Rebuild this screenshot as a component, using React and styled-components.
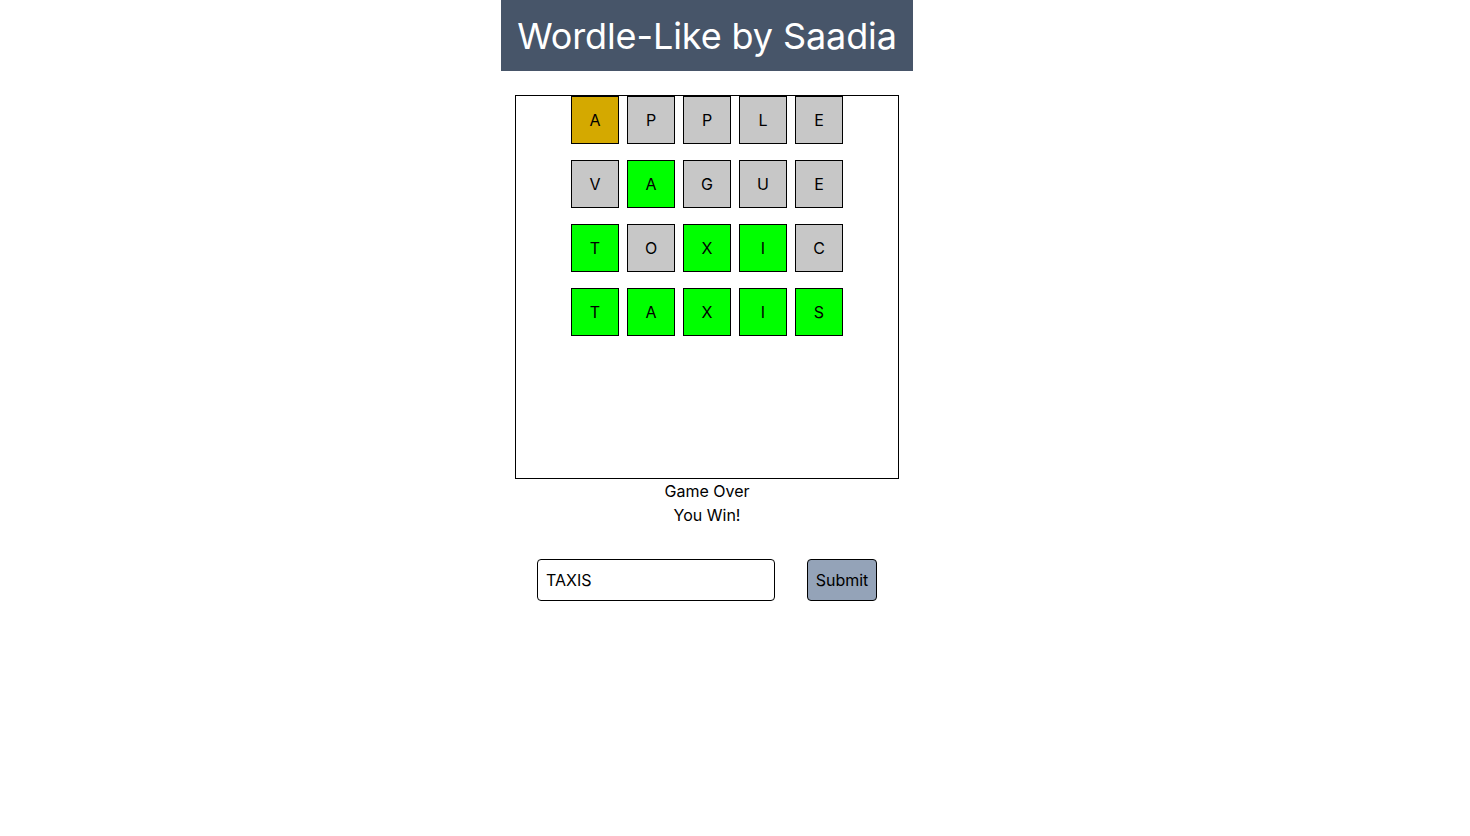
import React, { useState } from 'react';
import styled, { createGlobalStyle } from 'styled-components';

const GlobalStyle = createGlobalStyle`
  body {
    margin: 0;
    background: #fff;
    font-family: Inter, 'Noto Sans', sans-serif;
    color: #000;
  }
`;

const guesses = [
  { word: 'APPLE', marks: 'yxxxx' },
  { word: 'VAGUE', marks: 'xgxxx' },
  { word: 'TOXIC', marks: 'gxggx' },
  { word: 'TAXIS', marks: 'ggggg' },
];

const tileColors = {
  g: '#00ff00',
  y: '#d4a900',
  x: '#c7c7c7',
};

export default function App() {
  const [value, setValue] = useState('TAXIS');

  return (
    <>
      <GlobalStyle />
      <Page>
        <Title>Wordle-Like by Saadia</Title>
        <Board>
          {guesses.map((g) => (
            <Row key={g.word}>
              {g.word.split('').map((ch, i) => (
                <Tile key={i} $mark={g.marks[i]}>
                  {ch}
                </Tile>
              ))}
            </Row>
          ))}
        </Board>
        <Status>
          <p>Game Over</p>
          <p>You Win!</p>
        </Status>
        <Form onSubmit={(e) => e.preventDefault()}>
          <GuessInput value={value} onChange={(e) => setValue(e.target.value)} />
          <SubmitButton type='submit'>Submit</SubmitButton>
        </Form>
      </Page>
    </>
  );
}

const Page = styled.div`
  display: flex;
  flex-direction: column;
  align-items: center;
  padding-right: 56px;
`;

const Title = styled.h1`
  margin: 0;
  padding: 16px 16px 15px;
  background-color: #475569;
  color: #fff;
  font-size: 36px;
  font-weight: 400;
  line-height: 40px;
  letter-spacing: -0.1px;
`;

const Board = styled.div`
  box-sizing: border-box;
  margin-top: 24px;
  width: 384px;
  height: 384px;
  border: 1px solid #000;
  display: flex;
  flex-direction: column;
  align-items: center;
  gap: 16px;
`;

const Row = styled.div`
  display: flex;
  gap: 8px;
`;

const Tile = styled.div`
  box-sizing: border-box;
  width: 48px;
  height: 48px;
  border: 1px solid #000;
  background-color: ${({ $mark }) => tileColors[$mark]};
  display: flex;
  align-items: center;
  justify-content: center;
  font-size: 16px;
`;

const Status = styled.div`
  text-align: center;
  font-size: 16px;
  line-height: 24px;

  p {
    margin: 0;
  }
`;

const Form = styled.form`
  margin-top: 32px;
  display: flex;
  gap: 32px;
`;

const GuessInput = styled.input`
  box-sizing: border-box;
  width: 238px;
  height: 42px;
  padding: 0 8px;
  border: 1px solid #000;
  border-radius: 4px;
  font-family: Inter, sans-serif;
  font-size: 16px;
  color: #000;
  outline: none;
`;

const SubmitButton = styled.button`
  box-sizing: border-box;
  width: 70px;
  height: 42px;
  padding: 0;
  border: 1px solid #000;
  border-radius: 4px;
  background-color: #94a3b8;
  font-family: Inter, sans-serif;
  font-size: 16px;
  color: #000;
  cursor: pointer;
`;
